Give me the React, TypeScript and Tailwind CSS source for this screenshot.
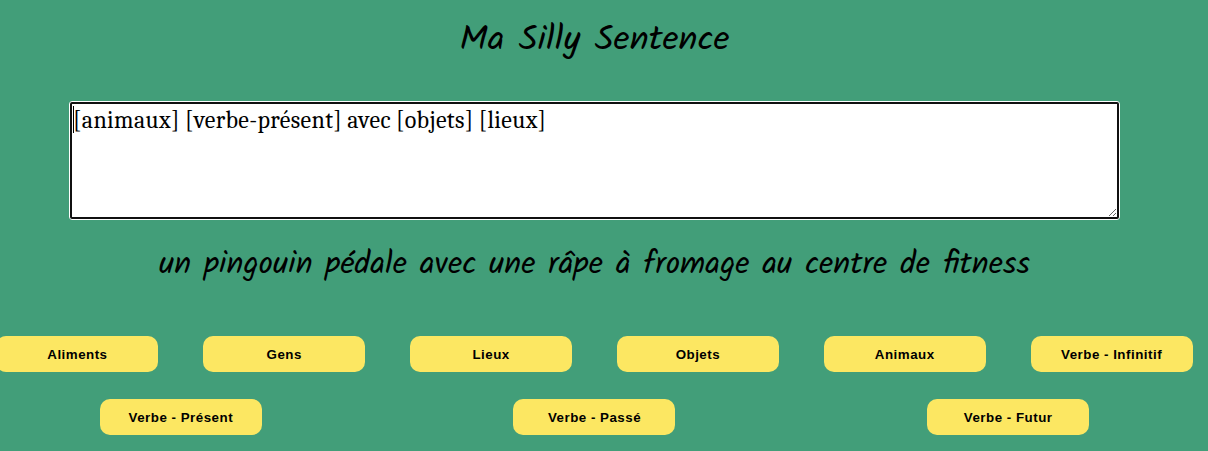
const firstRow = ["Aliments", "Gens", "Lieux", "Objets", "Animaux", "Verbe - Infinitif"];
const secondRow = ["Verbe - Présent", "Verbe - Passé", "Verbe - Futur"];

function WordButton({ label }: { label: string }) {
  return (
    <button className="h-9 w-[162px] shrink-0 rounded-[10px] bg-[#fce762] pt-px font-['Liberation_Sans',Arial,sans-serif] text-[13.333px] font-bold leading-4 tracking-[0.5px] text-black">
      {label}
    </button>
  );
}

export default function App() {
  return (
    <main className="h-[451px] w-[1208px] overflow-hidden bg-[#429e79] text-black">
      <div className="flex w-[1189px] flex-col items-center">
        <h1 className="mt-[15px] h-[52px] whitespace-nowrap font-[Kalam,cursive] text-[35.7px] leading-[52px]">
          Ma Silly Sentence
        </h1>
        <div className="relative mt-[34px] h-[119px] w-[1051px] rounded-[3px] border border-white bg-[#101010] p-[2px]">
          <textarea
            spellCheck={false}
            defaultValue="[animaux] [verbe-présent] avec [objets] [lieux]"
            className="block h-full w-full resize bg-white px-px pt-[2px] font-[Cambria,'Liberation_Serif',serif] text-[24px] leading-[28px] tracking-[0.35px] [word-spacing:-0.5px] outline-none"
          />
          <span className="absolute left-[3px] top-[4px] h-[27px] w-px bg-black" />
        </div>
        <p className="mt-[20px] h-[50px] whitespace-nowrap font-[Kalam,cursive] text-[31.7px] leading-[50px]">
          un pingouin pédale avec une râpe à fromage au centre de fitness
        </p>
        <div className="mt-[46px] flex w-[1241px] shrink-0 justify-around">
          {firstRow.map((label) => (
            <WordButton key={label} label={label} />
          ))}
        </div>
        <div className="mt-[27px] flex w-[1241px] shrink-0 justify-around">
          {secondRow.map((label) => (
            <WordButton key={label} label={label} />
          ))}
        </div>
      </div>
    </main>
  );
}
